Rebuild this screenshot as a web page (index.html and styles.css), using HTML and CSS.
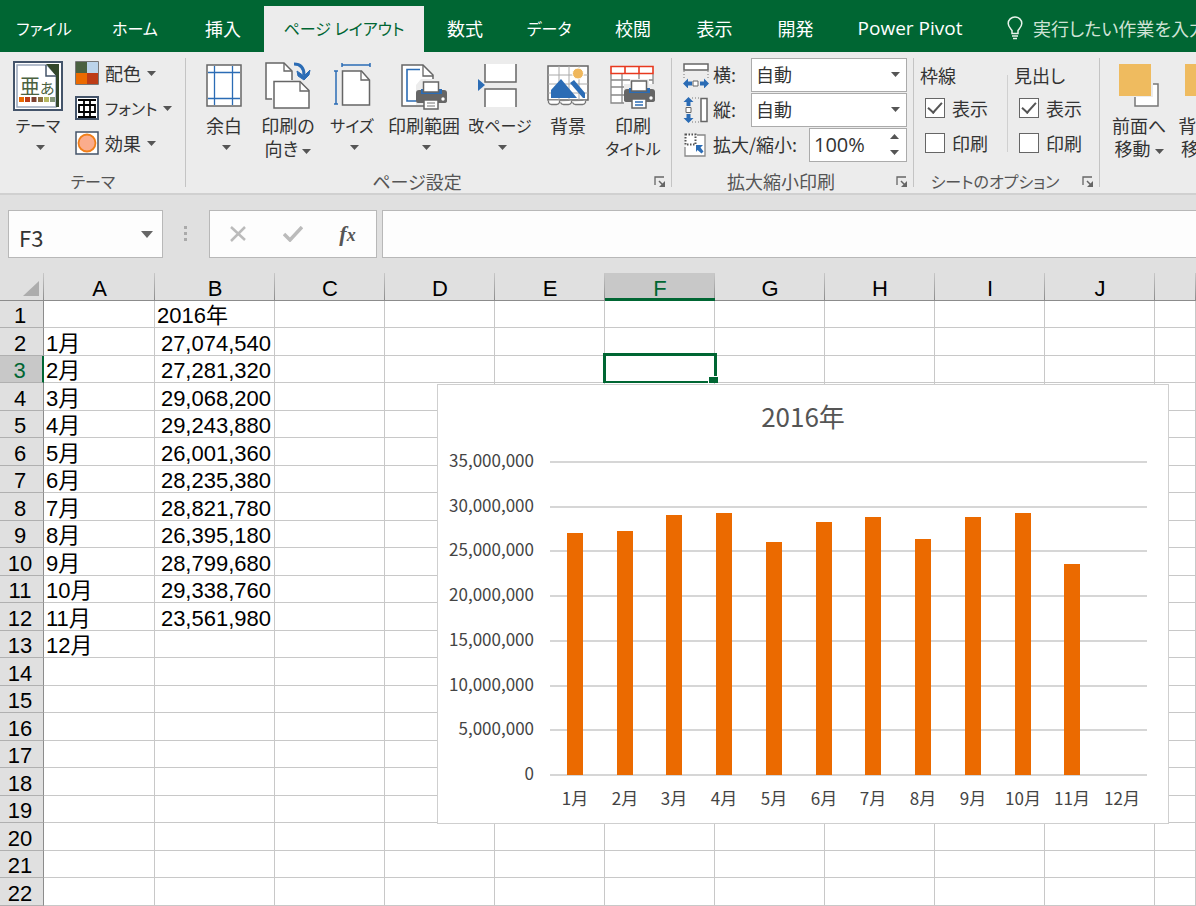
FILE: index.html
```html
<!DOCTYPE html>
<html lang="ja">
<head>
<meta charset="utf-8">
<title>ページ レイアウト</title>
<link rel="stylesheet" href="styles.css">
</head>
<body>
<svg class="defs" aria-hidden="true">
  <symbol id="arrow" viewBox="0 0 9 5"><path d="M0 0h9L4.500 5z" fill="#555"/></symbol>
  <symbol id="launcher" viewBox="0 0 12 12"><path d="M1 9V1h9" fill="none" stroke="#666" stroke-width="1.300"/><path d="M5 5l5 5" stroke="#666" stroke-width="1.500"/><path d="M11 5v6H5z" fill="#666"/></symbol>
  <symbol id="printer" viewBox="0 0 33 29">
    <path d="M4 9h25q3 0 3 3v8q0 2-3 2H4q-3 0-3-2v-8q0-3 3-3z" fill="#666"/>
    <path d="M6 8v5h21V8" fill="#2b6cb5"/>
    <path d="M8.500 1h15v10h-15z" fill="#fff" stroke="#666" stroke-width="1.500"/>
    <path d="M9 19h14v9H9z" fill="#fff" stroke="#666" stroke-width="1.500"/>
    <circle cx="28" cy="18" r="1.700" fill="#fff"/>
  </symbol>
</svg>

<nav class="tabs" aria-label="リボン タブ">
  <button class="tab kana">ファイル</button>
  <button class="tab kana">ホーム</button>
  <button class="tab">挿入</button>
  <button class="tab tab-active kana">ページ レイアウト</button>
  <button class="tab">数式</button>
  <button class="tab kana">データ</button>
  <button class="tab">校閲</button>
  <button class="tab">表示</button>
  <button class="tab">開発</button>
  <button class="tab tab-latin">Power Pivot</button>
  <button class="tab tell-me">
    <svg width="16" height="24" viewBox="0 0 16 24" fill="none" stroke="#e8f3ec" stroke-width="1.500"><path d="M5 17.500v-3C3 12 1.200 10.500 1.200 7.500a6.800 6.500 0 0 1 13.600 0c0 3-1.800 4.500-3.800 7v3z"/><path d="M5 20h6M6 22.500h4"/></svg>
    <span>実行したい作業を入力</span>
  </button>
</nav>

<section class="ribbon">
  <div class="group">
    <div class="group-body theme-body">
      <button class="big">
        <svg width="50" height="50" viewBox="0 0 50 50"><path d="M1 1h48v48H1z" fill="#fff" stroke="#44546a" stroke-width="2"/><path d="M4 46V4h29l10 11v31z" fill="#fff" stroke="#9aa7ba" stroke-width="1.500"/><path d="M33 3h13v43h-3V15z" fill="#33472b"/><path d="M33 4v11h10" fill="#fff" stroke="#44546a" stroke-width="1.500"/><text x="7" y="33" class="icon-glyph" font-size="20">亜</text><text x="27" y="33" class="icon-glyph" font-size="15">あ</text><path d="M6 36h5v5H6z" fill="#eb6a00"/><path d="M12 36h5v5h-5z" fill="#bd3c16"/><path d="M18.500 36h5v5h-5z" fill="#7d4030"/><path d="M25 36h5v5h-5z" fill="#8d7040"/><path d="M31 36h5v5h-5z" fill="#b7b861"/><path d="M37 36h5v5h-5z" fill="#839779"/></svg>
        <span class="kana">テーマ</span>
        <svg class="arrow" width="9" height="5"><use href="#arrow"/></svg>
      </button>
      <div class="stack">
        <button class="small"><svg width="24" height="24" viewBox="0 0 24 24"><path d="M1 1h11v11H1z" fill="#4b6140"/><path d="M12 1h11v11H12z" fill="#bcd4ea"/><path d="M1 12h11v11H1z" fill="#eb6a00"/><path d="M12 12h11v11H12z" fill="#bd3c16"/><path d="M.500.500h23v23H.500z" fill="none" stroke="#777"/></svg><span>配色</span><svg class="arrow" width="9" height="5"><use href="#arrow"/></svg></button>
        <button class="small"><svg width="24" height="24" viewBox="0 0 24 24"><path d="M1 1h22v22H1z" fill="#fff" stroke="#44546a" stroke-width="2"/><path d="M3 4h18M3 21h18M9 4v17M15 4v17M4 9h16v7H4z" fill="none" stroke="#000" stroke-width="1.800"/></svg><span class="kana">フォント</span><svg class="arrow" width="9" height="5"><use href="#arrow"/></svg></button>
        <button class="small"><svg width="24" height="24" viewBox="0 0 24 24"><path d="M1 1h22v22H1z" fill="#fff" stroke="#44546a" stroke-width="1.500"/><circle cx="12" cy="12" r="8.500" fill="#fbac8c" stroke="#f07f1a" stroke-width="1.800"/></svg><span>効果</span><svg class="arrow" width="9" height="5"><use href="#arrow"/></svg></button>
      </div>
    </div>
    <div class="group-label kana">テーマ</div>
  </div>

  <div class="group">
    <div class="group-body page-body">
      <button class="big">
        <svg width="36" height="50" viewBox="0 0 36 50"><path d="M1 3h34v41H1z" fill="#fff" stroke="#666" stroke-width="1.500"/><path d="M8.500 4v39M26.500 4v39M2 10.500h32M2 36.500h32" stroke="#2b6cb5" stroke-width="1.300"/></svg>
        <span>余白</span><svg class="arrow" width="9" height="5"><use href="#arrow"/></svg>
      </button>
      <button class="big">
        <svg width="46" height="50" viewBox="0 0 46 50"><path d="M7 37H1V1h18l8 8v9" fill="#fff" stroke="#666" stroke-width="1.500"/><path d="M19 1v8h8" fill="none" stroke="#666" stroke-width="1.300"/><path d="M9 19.500h26l9 9V46H9z" fill="#fff" stroke="#666" stroke-width="1.500"/><path d="M35 20v9h9" fill="none" stroke="#666" stroke-width="1.300"/><path d="M29 2q10 0 10 11" fill="none" stroke="#2b6cb5" stroke-width="3"/><path d="M32 9l7 5 6-6-1 5-5 5-6-4z" fill="#2b6cb5" stroke="#2b6cb5"/></svg>
        <span>印刷の<br>向き <svg width="9" height="5"><use href="#arrow"/></svg></span>
      </button>
      <button class="big">
        <svg width="38" height="50" viewBox="0 0 38 50"><path d="M9.500 9h19l8 9v25h-27z" fill="#fff" stroke="#666" stroke-width="1.500"/><path d="M28 9v9h8" fill="none" stroke="#666" stroke-width="1.300"/><path d="M9 3h28M9 1v4M37 1v4M3 9v33M1 9h4M1 42h4" stroke="#2b6cb5" stroke-width="1.500"/></svg>
        <span class="kana">サイズ</span><svg class="arrow" width="9" height="5"><use href="#arrow"/></svg>
      </button>
      <button class="big">
        <svg width="48" height="50" viewBox="0 0 48 50"><path d="M2 3h21l10 10v31H2z" fill="#fff" stroke="#666" stroke-width="1.500"/><path d="M23 3v11h10" fill="none" stroke="#666" stroke-width="1.300"/><path d="M20 7.500H7V39h9" fill="none" stroke="#2b6cb5" stroke-width="1.600"/><path d="M21 17h14v6h11v20H16V23z" fill="#ececec"/><use href="#printer" x="15" y="19" width="33" height="29"/><path d="M27 41h8M27 44h8" stroke="#777"/></svg>
        <span>印刷範囲</span><svg class="arrow" width="9" height="5"><use href="#arrow"/></svg>
      </button>
      <button class="big">
        <svg width="46" height="50" viewBox="0 0 46 50"><path d="M8 2v18h31V2" fill="#fff" stroke="#666" stroke-width="1.500"/><path d="M8 45V27h31v18" fill="#fff" stroke="#666" stroke-width="1.500"/><path d="M1 17l7 6-7 6z" fill="#2b6cb5"/></svg>
        <span class="kana">改ページ</span><svg class="arrow" width="9" height="5"><use href="#arrow"/></svg>
      </button>
      <button class="big">
        <svg width="42" height="50" viewBox="0 0 42 50"><path d="M1 4h40v34H1z" fill="#fff" stroke="#666" stroke-width="1.500"/><path d="M12 4v34M22 4v34M32 4v34M1 13h40M1 22h40M1 31h40" stroke="#aaa"/><path d="M4 36V28L14 17l16 19z" fill="#2b6cb5"/><path d="M23 21l4-3 11 13v5h-2z" fill="#2b6cb5"/><circle cx="31" cy="11.500" r="5.500" fill="#efb75c" stroke="#fff"/><path d="M1.500 38.500v2q1 2 3 2h5q2 0 3-2v-2M13.500 40.500q1 2 3 2h5q2 0 3-2v-2M25.500 40.500q1 2 3 2h7q2 0 3-2v-2" fill="#fff" stroke="#777" stroke-width="1.300"/></svg>
        <span>背景</span>
      </button>
      <button class="big">
        <svg width="46" height="50" viewBox="0 0 46 50"><path d="M1 4h42v37H1z" fill="#fff"/><path d="M1 12v29h13M12 12v29M29 12v8M43 12v14M1 18h42M1 25h16M1 33h14" fill="none" stroke="#888" stroke-width="1.300"/><path d="M1 4.500h42v7H1zM15 4v8M29 4v8" fill="none" stroke="#e8391f" stroke-width="1.600"/><path d="M20 17h19v5h7v20H14V22h6z" fill="#ececec"/><use href="#printer" x="13" y="18" width="33" height="29"/><path d="M25 40h8M25 43h8" stroke="#2b6cb5" stroke-width="1.500"/></svg>
        <span>印刷</span><span class="kana second">タイトル</span>
      </button>
    </div>
    <div class="group-label with-launcher">ページ設定</div>
    <button class="launcher" aria-label="ページ設定の詳細"><svg width="12" height="12"><use href="#launcher"/></svg></button>
  </div>

  <div class="group">
    <div class="group-body scale-body">
      <div class="field">
        <svg width="26" height="26" viewBox="0 0 26 26"><path d="M1 2h24v6H1z" fill="#fff" stroke="#666" stroke-width="1.500"/><path d="M1 9v8M25 9v8" stroke="#777" stroke-dasharray="1 2"/><path d="M10 19h5v5h-5z" fill="#fff" stroke="#666"/><path d="M0 21.500l5-5v3h4v4H5v3zM26 21.500l-5-5v3h-4v4h4v3z" fill="#2b6cb5"/></svg>
        <label for="fit-w">横:</label>
        <div class="combo"><select id="fit-w"><option>自動</option></select><svg width="9" height="5"><use href="#arrow"/></svg></div>
      </div>
      <div class="field">
        <svg width="26" height="26" viewBox="0 0 26 26"><path d="M18 1.500h6v23h-6z" fill="#fff" stroke="#666" stroke-width="1.500"/><path d="M9 1h8M9 25h8" stroke="#777" stroke-dasharray="1 2"/><path d="M3 10.500h5v5H3z" fill="#fff" stroke="#666"/><path d="M5.500 0l5 5h-3v4h-4V5h-3zM5.500 26l5-5h-3v-4h-4v4h-3z" fill="#2b6cb5"/></svg>
        <label for="fit-h">縦:</label>
        <div class="combo"><select id="fit-h"><option>自動</option></select><svg width="9" height="5"><use href="#arrow"/></svg></div>
      </div>
      <div class="field">
        <svg width="26" height="26" viewBox="0 0 26 26"><path d="M14 3h8v21H2V15" fill="#fff" stroke="#888" stroke-width="1.300"/><path d="M2.500 2.500h10v10h-10z" fill="#fff" stroke="#555" stroke-width="2" stroke-dasharray="1.500 1.500"/><path d="M13 13h7l-2.500 2.500 3 4-2 2-4-3.500-1.500 2z" fill="#2b6cb5"/></svg>
        <label for="scale">拡大/縮小:</label>
        <div class="spin"><input id="scale" type="text" value="100%"><button aria-label="増やす"><svg class="flip" width="9" height="5"><use href="#arrow"/></svg></button><button aria-label="減らす"><svg width="9" height="5"><use href="#arrow"/></svg></button></div>
      </div>
    </div>
    <div class="group-label with-launcher">拡大縮小印刷</div>
    <button class="launcher" aria-label="拡大縮小印刷の詳細"><svg width="12" height="12"><use href="#launcher"/></svg></button>
  </div>

  <div class="group">
    <div class="group-body options-body">
      <fieldset class="options">
        <legend>枠線</legend>
        <label><input type="checkbox" checked>表示</label>
        <label><input type="checkbox">印刷</label>
      </fieldset>
      <fieldset class="options">
        <legend>見出し</legend>
        <label><input type="checkbox" checked>表示</label>
        <label><input type="checkbox">印刷</label>
      </fieldset>
    </div>
    <div class="group-label with-launcher kana">シートのオプション</div>
    <button class="launcher" aria-label="シートのオプションの詳細"><svg width="12" height="12"><use href="#launcher"/></svg></button>
  </div>

  <div class="group">
    <div class="group-body arrange-body">
      <button class="big">
        <svg width="40" height="50" viewBox="0 0 40 50"><path d="M16 22h23v22H16z" fill="#fff" stroke="#777" stroke-width="1.500"/><path d="M0 1h34v34H0z" fill="#ececec"/><path d="M0 2h32v32H0z" fill="#efbb5f"/></svg>
        <span>前面へ<br>移動 <svg width="9" height="5"><use href="#arrow"/></svg></span>
      </button>
      <button class="big">
        <svg width="40" height="50" viewBox="0 0 40 50"><path d="M0 2h32v32H0z" fill="#efbb5f"/><path d="M16 22h23v22H16z" fill="#fff" stroke="#777" stroke-width="1.500"/></svg>
        <span>背面へ<br>移動 <svg width="9" height="5"><use href="#arrow"/></svg></span>
      </button>
    </div>
  </div>
</section>

<section class="formula-bar">
  <div class="name-box"><input type="text" value="F3" aria-label="名前ボックス"><svg width="12" height="7" viewBox="0 0 12 7"><path d="M0 0h12L6 7z" fill="#666"/></svg></div>
  <svg class="grip" width="4" height="16" viewBox="0 0 4 16"><path d="M0 0h3v3H0zM0 6h3v3H0zM0 12h3v3H0z" fill="#aaa"/></svg>
  <div class="formula-actions">
    <button aria-label="キャンセル"><svg width="18" height="16" viewBox="0 0 18 16"><path d="M2 1l14 13M16 1L2 15" stroke="#bbb" stroke-width="2.500"/></svg></button>
    <button aria-label="入力"><svg width="20" height="16" viewBox="0 0 20 16"><path d="M1 8l6 6L19 1" fill="none" stroke="#bbb" stroke-width="3.500"/></svg></button>
    <button class="fx" aria-label="関数の挿入">f<span>x</span></button>
  </div>
  <input class="formula" type="text" aria-label="数式バー">
</section>

<main class="sheet">
  <table class="grid">
    <colgroup><col class="c-num"><col class="c-a"><col class="c-b"><col class="c"><col class="c"><col class="c"><col class="c"><col class="c"><col class="c"><col class="c"><col class="c"><col></colgroup>
    <thead><tr><th class="corner"><svg width="16" height="15" viewBox="0 0 16 15"><path d="M16 0v15H0z" fill="#adadad"/></svg></th><th>A</th><th>B</th><th>C</th><th>D</th><th>E</th><th class="col-active">F</th><th>G</th><th>H</th><th>I</th><th>J</th><th></th></tr></thead>
    <tbody id="rows"></tbody>
  </table>
  <svg class="chart" id="chart" viewBox="0 0 732 440" role="img" aria-label="2016年"></svg>
</main>
<script src="script.js"></script>
</body>
</html>
```

FILE: styles.css
```css
* { box-sizing: border-box; }

body {
  margin: 0;
  height: 100vh;
  overflow: hidden;
  display: flex;
  flex-direction: column;
  background: #e0e0e0;
  color: #333;
  font-family: "Noto Sans CJK JP", sans-serif;
  font-size: 18px;
  font-feature-settings: "palt";
}

button, input, select {
  font: inherit;
  font-feature-settings: inherit;
  color: inherit;
  border: 0;
  padding: 0;
  margin: 0;
  background: none;
  border-radius: 0;
  outline: 0;
}

svg { flex: none; }
.defs { position: absolute; width: 0; height: 0; }
.kana { font-size: 16px; }

/* Tabs */
.tabs {
  display: grid;
  grid-template-columns: 88px 94px 82px 160px 82px 86px 82px 81px 81px 148px auto;
  flex: none;
  height: 52px;
  padding-top: 6px;
  background: #006633;
}
.tab { color: #fff; white-space: nowrap; line-height: 24px; padding-bottom: 2px; }
.tab-active { background: #ececec; color: #006633; }
.tab-latin { font-family: "Open Sans", sans-serif; font-size: 19px; }
.tell-me {
  display: flex;
  align-items: center;
  gap: 10px;
  padding-left: 23px;
  color: #cfe3d6;
}

/* Ribbon */
.ribbon {
  display: flex;
  flex: none;
  height: 143px;
  overflow: hidden;
  background: #ececec;
  border-bottom: 2px solid #d0d0d0;
}
.group {
  position: relative;
  flex: none;
  display: flex;
  flex-direction: column;
  padding-top: 8px;
}
.group:not(:last-child)::after {
  content: "";
  position: absolute;
  right: 0;
  top: 6px;
  bottom: 6px;
  width: 1px;
  background: #c4c4c4;
}
.group-body { flex: none; height: 108px; }
.group-label { text-align: center; line-height: 26px; color: #555; }
.with-launcher { padding-right: 24px; }
.launcher {
  position: absolute;
  right: 6px;
  bottom: 5px;
  width: 12px;
  height: 12px;
}
.launcher svg { display: block; }

.big {
  display: flex;
  flex-direction: column;
  align-items: center;
  line-height: 23px;
  white-space: nowrap;
  padding-top: 2px;
}
.big > span { margin-top: 2px; }
.big > .second { margin-top: 0; }
.big > span svg { vertical-align: middle; }
.big .arrow { margin: 8px 0 0 5px; }

.theme-body { display: flex; gap: 12px; padding: 0 17px 0 13px; }
.stack { display: flex; flex-direction: column; gap: 11px; }
.theme-body .stack { padding-top: 1px; }
.theme-body .big { padding-top: 1px; }
.theme-body .big > span { margin-top: 3px; }
.small { display: flex; align-items: center; gap: 6px; height: 24px; white-space: nowrap; }
.group:first-child { width: 186px; }
.icon-glyph { fill: #4b6140; font-family: "Noto Sans CJK JP", sans-serif; }

.page-body {
  display: grid;
  grid-template-columns: 56px 72px 56px 88px 64px 72px 58px;
  padding: 0 10px;
}

.scale-body { display: flex; flex-direction: column; width: 242px; padding: 0 7px 0 11px; margin-top: -3px; height: 111px; }
.field { display: flex; align-items: center; gap: 4px; height: 35px; }
.field label { white-space: nowrap; line-height: 24px; padding-bottom: 2px; }
.combo { display: grid; align-items: center; width: 156px; margin-left: auto; }
.combo select {
  grid-area: 1 / 1;
  appearance: none;
  height: 34px;
  padding: 0 4px 2px;
  background: #fff;
  border: 1px solid #ababab;
}
.combo svg { grid-area: 1 / 1; justify-self: end; margin-right: 7px; pointer-events: none; }
.spin {
  display: grid;
  grid-template: 1fr 1fr / 1fr 24px;
  width: 98px;
  height: 34px;
  margin-left: auto;
  background: #fff;
  border: 1px solid #ababab;
}
.spin input { grid-row: 1 / 3; min-width: 0; width: 100%; padding-left: 4px; font-family: "Open Sans", sans-serif; font-size: 20px; }
.spin button { display: grid; place-items: center; }
.flip { transform: rotate(180deg); }

.options-body { display: flex; width: 186px; }
.options { border: 0; margin: 0; padding: 0 0 0 11px; width: 93px; }
.options + .options { border-left: 1px solid #d0d0d0; height: 92px; }
.options legend { padding: 0; margin-left: -5px; line-height: 30px; }
.options label { display: flex; align-items: center; gap: 7px; height: 35px; white-space: nowrap; }
.options input {
  appearance: none;
  display: grid;
  place-items: center;
  flex: none;
  width: 20px;
  height: 20px;
  background: #fff;
  border: 1px solid #666;
}
.options input:checked::after {
  content: "";
  width: 6px;
  height: 12px;
  margin-bottom: 4px;
  border: solid #555;
  border-width: 0 2px 2px 0;
  transform: rotate(42deg);
}

.arrange-body { display: flex; gap: 12px; padding-left: 12px; }

/* Formula bar */
.formula-bar {
  display: flex;
  flex: none;
  align-items: center;
  height: 78px;
  padding: 15px 0;
  padding-left: 8px;
}
.name-box, .formula-actions, .formula {
  height: 48px;
  background: #fdfdfd;
  border: 1px solid #b8b8b8;
}
.name-box { display: flex; align-items: center; width: 155px; padding: 0 9px 0 10px; }
.name-box input { flex: 1; min-width: 0; padding-top: 5px; font-size: 22px; }
.grip { margin: 0 21px; }
.formula-actions { display: grid; grid-template-columns: repeat(3, 55px); align-items: center; width: 168px; }
.formula-actions button { display: grid; place-items: center; }
.formula-actions .fx { display: block; font: italic bold 22px/24px "Liberation Serif", serif; color: #555; }
.fx span { font-size: 18px; }
.formula { flex: 1; min-width: 0; margin-left: 5px; border-right: 0; }

/* Sheet */
.sheet {
  position: relative;
  flex: 1;
  overflow: hidden;
  color: #000;
  font-family: "Liberation Sans", "Noto Sans CJK JP", sans-serif;
  font-size: 22px;
}
.grid { width: 100%; table-layout: fixed; border-collapse: separate; border-spacing: 0; background: #fff; }
.c-num { width: 44px; }
.c-a { width: 111px; }
.c-b { width: 120px; }
.c { width: 110px; }
.grid th, .grid td { padding: 0; font-weight: normal; line-height: 23px; white-space: nowrap; }
.grid thead th {
  height: 28px;
  padding-top: 4px;
  background: linear-gradient(#c8c8c8, #8c8c8c) right / 1px 100% no-repeat #e0e0e0;
  border-bottom: 1px solid #8c8c8c;
}
.grid thead .corner { text-align: right; padding-right: 5px; }
.corner svg { display: block; margin-left: auto; }
.grid thead .col-active {
  background-color: #c8c8c8;
  color: #006633;
  border-bottom-color: #006633;
  box-shadow: inset 0 -2px #006633;
}
.grid tbody tr { height: 28px; }
.grid tbody tr:nth-child(odd) { height: 27px; }
.grid tbody th {
  background: #e0e0e0;
  border-right: 1px solid #8c8c8c;
  border-bottom: 1px solid #b0b0b0;
  padding: 3px 3px 0 0;
}
.grid tbody .row-active { background: #c8c8c8; color: #006633; border-right: 2px solid #006633; }
.grid td { border-right: 1px solid #c8c8c8; border-bottom: 1px solid #c8c8c8; padding: 3px 2px 0; }
.grid .num { text-align: right; padding-right: 3px; }
.grid .selected { position: relative; }
.selected::before {
  content: "";
  position: absolute;
  inset: -3px -3px -1px -2px;
  border: 3px solid #006633;
  border-bottom-width: 2px;
}
.selected::after {
  content: "";
  position: absolute;
  right: -4px;
  bottom: -1px;
  width: 9px;
  height: 6px;
  background: #006633;
  border: solid #fff;
  border-width: 1px 0 0 1px;
}

/* Chart floats over the cells */
.chart {
  position: absolute;
  left: 437px;
  top: 111px;
  width: 732px;
  height: 440px;
  background: #fff;
  outline: 1px solid #cfcfcf;
  outline-offset: -1px;
  font-family: "Noto Sans CJK JP", sans-serif;
  font-size: 17px;
  fill: #444;
}
.chart-title { font-size: 26px; text-anchor: middle; fill: #555; }
.axis-y { text-anchor: end; }
.axis-x { text-anchor: middle; }
.gridline { stroke: #d6d6d6; stroke-width: 2; }
.bar { fill: #eb6a00; }
```

FILE: script.js
```js
const values = [27074540, 27281320, 29068200, 29243880, 26001360, 28235380,
  28821780, 26395180, 28799680, 29338760, 23561980];
const ROWS = 22;
const COLS = 11;

const body = document.getElementById("rows");
for (let r = 1; r <= ROWS; r++) {
  const tr = body.insertRow();
  const th = document.createElement("th");
  th.textContent = r;
  if (r === 3) th.className = "row-active";
  tr.append(th);
  for (let c = 0; c < COLS; c++) {
    const td = tr.insertCell();
    if (c === 0 && r >= 2 && r <= 13) td.textContent = (r - 1) + "月";
    if (c === 1 && r === 1) td.textContent = "2016年";
    if (c === 1 && r >= 2 && values[r - 2]) {
      td.textContent = values[r - 2].toLocaleString("en-US");
      td.className = "num";
    }
    if (c === 5 && r === 3) td.className = "selected";
  }
}

const plot = { left: 113, right: 710, top: 78, bottom: 391, max: 35000000 };
const height = plot.bottom - plot.top;
const step = (plot.right - plot.left) / 12;
let svg = '<text class="chart-title" x="366" y="43">2016年</text>';
for (let i = 0; i <= 7; i++) {
  const y = Math.round(plot.bottom - (height * i) / 7);
  svg += `<line class="gridline" x1="${plot.left}" x2="${plot.right}" y1="${y}" y2="${y}"/>`;
  svg += `<text class="axis-y" x="97" y="${y + 5}">${(i * 5000000).toLocaleString("en-US")}</text>`;
}
for (let i = 0; i < 12; i++) {
  const x = Math.round(plot.left + step * (i + 0.5));
  if (values[i]) {
    const h = Math.round((values[i] / plot.max) * height);
    svg += `<rect class="bar" x="${x - 8}" y="${plot.bottom - h}" width="16" height="${h}"/>`;
  }
  svg += `<text class="axis-x" x="${x}" y="421">${i + 1}月</text>`;
}
document.getElementById("chart").innerHTML = svg;
```
